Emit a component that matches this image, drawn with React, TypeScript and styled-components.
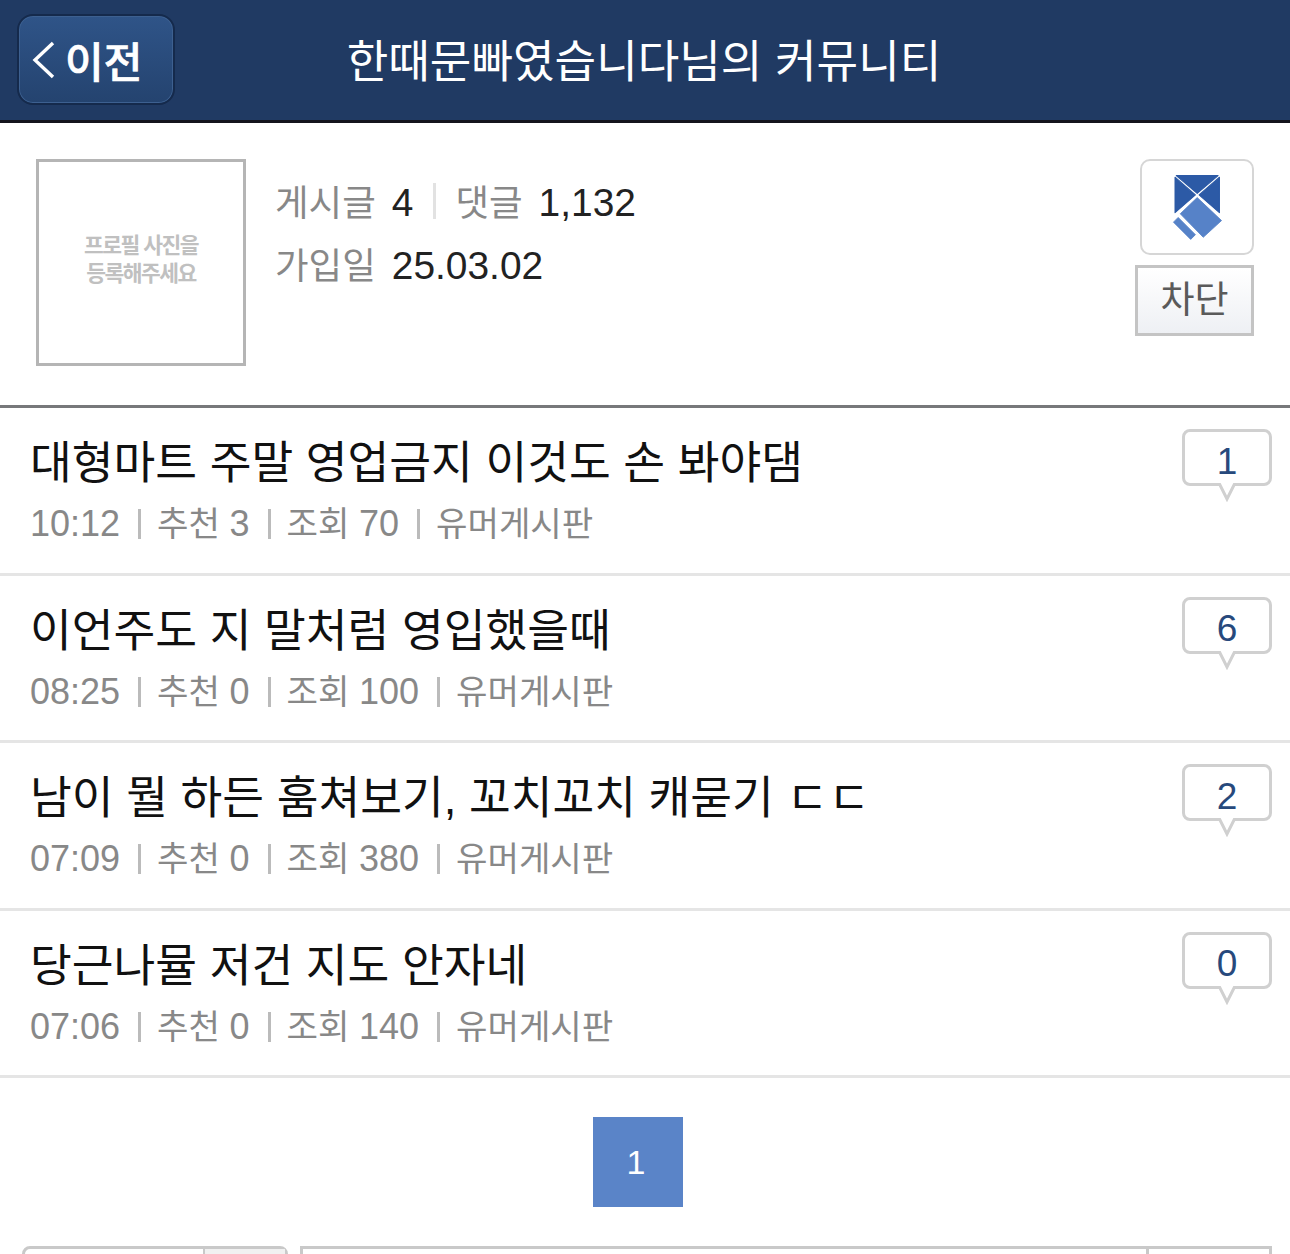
import styled, { createGlobalStyle } from "styled-components";

const posts = [
  { title: "대형마트 주말 영업금지 이것도 손 봐야댐", time: "10:12", up: 3, views: 70, board: "유머게시판", comments: 1 },
  { title: "이언주도 지 말처럼 영입했을때", time: "08:25", up: 0, views: 100, board: "유머게시판", comments: 6 },
  { title: "남이 뭘 하든 훔쳐보기, 꼬치꼬치 캐묻기 ㄷㄷ", time: "07:09", up: 0, views: 380, board: "유머게시판", comments: 2 },
  { title: "당근나뮬 저건 지도 안자네", time: "07:06", up: 0, views: 140, board: "유머게시판", comments: 0 },
];

const GlobalStyle = createGlobalStyle`
  html, body {
    margin: 0;
    padding: 0;
    background: #fff;
    overflow: hidden;
  }
  body {
    font-family: "Liberation Sans", "Noto Sans CJK KR", sans-serif;
  }
`;

const ShieldIcon = () => (
  <svg width="57" height="69" viewBox="0 0 54 66">
    <g fill="#2c5aa6" stroke="#2c5aa6" strokeWidth="1" strokeLinejoin="round">
      <polygon points="6.7,2.5 46.7,2.5 26.7,19.5" />
      <polygon points="5.5,4 25,21 5.5,38" />
      <polygon points="48,4 28.5,21 48,38" />
    </g>
    <g fill="#5682c8" stroke="#5682c8" strokeWidth="0.8" strokeLinejoin="round">
      <polygon points="26.7,23.5 50,45.5 32.5,61.5 10.5,39" />
      <polygon points="4,47 8.5,42.5 25,59 20.5,63.5" />
    </g>
  </svg>
);

export default function App() {
  return (
    <Page>
      <GlobalStyle />
      <Header>
        <BackButton>
          <svg width="24" height="40" viewBox="0 0 24 40">
            <path d="M21 3 L3 20 L21 37" fill="none" stroke="#fff" strokeWidth="3.4" />
          </svg>
          이전
        </BackButton>
        <HeaderTitle>한때문빠였습니다님의 커뮤니티</HeaderTitle>
      </Header>

      <Profile>
        <Avatar>
          프로필 사진을
          <br />
          등록해주세요
        </Avatar>
        <Stats>
          <StatRow>
            <StatLabel>게시글</StatLabel>
            <StatValue>4</StatValue>
            <StatDivider />
            <StatLabel>댓글</StatLabel>
            <StatValue>1,132</StatValue>
          </StatRow>
          <StatRow>
            <StatLabel>가입일</StatLabel>
            <StatValue>25.03.02</StatValue>
          </StatRow>
        </Stats>
        <Actions>
          <IconButton>
            <ShieldIcon />
          </IconButton>
          <BlockButton>차단</BlockButton>
        </Actions>
      </Profile>

      <PostList>
        {posts.map((post) => (
          <PostRow key={post.time}>
            <PostBody>
              <PostTitle>{post.title}</PostTitle>
              <PostMeta>
                <MetaNumber>{post.time}</MetaNumber>
                <MetaDivider />
                <span>
                  추천 <MetaNumber>{post.up}</MetaNumber>
                </span>
                <MetaDivider />
                <span>
                  조회 <MetaNumber>{post.views}</MetaNumber>
                </span>
                <MetaDivider />
                <span>{post.board}</span>
              </PostMeta>
            </PostBody>
            <CommentBubble>
              {post.comments}
              <BubbleTail width="24" height="19" viewBox="0 0 24 19">
                <path d="M4 0 L12 16 L20 0" fill="#fff" stroke="#d0d0d0" strokeWidth="3" />
              </BubbleTail>
            </CommentBubble>
          </PostRow>
        ))}
      </PostList>

      <Pagination>
        <PageNumber>1</PageNumber>
      </Pagination>

      <SearchBar>
        <SelectBox>
          <SelectArrow />
        </SelectBox>
        <SearchBox>
          <SearchSubmit />
        </SearchBox>
      </SearchBar>
    </Page>
  );
}

const Page = styled.div`
  width: 1290px;
  height: 1254px;
  overflow: hidden;
  background: #fff;
  color: #111;
`;

const Header = styled.header`
  position: relative;
  box-sizing: border-box;
  height: 123px;
  padding: 14px 0 0 17px;
  background: #203a63;
  border-bottom: 3px solid #14141c;
`;

const BackButton = styled.div`
  display: flex;
  align-items: center;
  gap: 9px;
  box-sizing: border-box;
  width: 158px;
  height: 91px;
  padding-left: 13px;
  border: 2px solid #152a4c;
  border-radius: 16px;
  background: linear-gradient(#2f5488, #24436f);
  box-shadow: inset 0 0 0 1px #3d6090;
  color: #fff;
  font-size: 42px;
  font-weight: 500;
  -webkit-text-stroke: 0.7px #fff;
`;

const HeaderTitle = styled.h1`
  position: absolute;
  top: 34px;
  left: 0;
  right: 2px;
  margin: 0;
  text-align: center;
  color: #fff;
  font-size: 45.2px;
  line-height: 58px;
  font-weight: 400;
`;

const Profile = styled.section`
  display: flex;
  box-sizing: border-box;
  height: 285px;
  padding: 36px 36px 0 36px;
  border-bottom: 3px solid #77787a;
`;

const Avatar = styled.div`
  display: flex;
  align-items: center;
  justify-content: center;
  text-align: center;
  box-sizing: border-box;
  width: 210px;
  height: 207px;
  padding-bottom: 6px;
  border: 3px solid #b5b5b5;
  color: #c0c0c0;
  font-size: 21.5px;
  line-height: 28px;
  font-weight: 700;
  letter-spacing: -1.5px;
`;

const Stats = styled.div`
  flex: 1;
  display: flex;
  flex-direction: column;
  gap: 9px;
  padding: 15px 0 0 29px;
`;

const StatRow = styled.div`
  display: flex;
  align-items: baseline;
  gap: 16px;
  height: 54px;
`;

const StatLabel = styled.span`
  color: #888;
  font-size: 36.5px;
`;

const StatValue = styled.span`
  color: #222;
  font-size: 38.9px;
`;

const StatDivider = styled.i`
  align-self: center;
  width: 3px;
  height: 36px;
  margin: 0 3px 0 4px;
  background: #e2e2e2;
`;

const Actions = styled.div`
  display: flex;
  flex-direction: column;
  align-items: flex-end;
  gap: 10px;
`;

const IconButton = styled.div`
  display: flex;
  align-items: center;
  justify-content: center;
  box-sizing: border-box;
  width: 114px;
  height: 96px;
  border: 2px solid #d6d6d6;
  border-radius: 10px;
`;

const BlockButton = styled.div`
  display: flex;
  align-items: center;
  justify-content: center;
  box-sizing: border-box;
  width: 119px;
  height: 71px;
  padding-bottom: 7px;
  border: 3px solid #c4c4c4;
  background: linear-gradient(#fff, #eef0f4);
  color: #5a5a5a;
  font-size: 37px;
`;

const PostList = styled.div`
  display: flex;
  flex-direction: column;
`;

const PostRow = styled.article`
  display: flex;
  justify-content: space-between;
  box-sizing: border-box;
  height: 167.5px;
  padding: 25px 18px 0 30px;
  border-bottom: 3px solid #e5e5e5;
`;

const PostBody = styled.div`
  display: flex;
  flex-direction: column;
`;

const PostTitle = styled.div`
  color: #111;
  font-size: 45.4px;
  line-height: 62px;
`;

const PostMeta = styled.div`
  display: flex;
  align-items: center;
  gap: 17px;
  margin-top: -1px;
  color: #888;
  font-size: 34.2px;
  line-height: 60px;
`;

const MetaNumber = styled.span`
  font-size: 36px;
`;

const MetaDivider = styled.i`
  width: 3px;
  height: 30px;
  margin: 0 -1px 0 1px;
  background: #bbb;
`;

const CommentBubble = styled.div`
  position: relative;
  display: flex;
  align-items: center;
  justify-content: center;
  box-sizing: border-box;
  width: 90px;
  height: 57px;
  margin-top: -4px;
  padding-top: 8px;
  border: 3px solid #d0d0d0;
  border-radius: 8px;
  color: #27497c;
  font-size: 37px;
`;

const BubbleTail = styled.svg`
  position: absolute;
  left: 30px;
  top: 51px;
`;

const Pagination = styled.nav`
  display: flex;
  justify-content: center;
  padding: 39px 14px 0 0;
`;

const PageNumber = styled.div`
  display: flex;
  align-items: center;
  justify-content: center;
  width: 90px;
  height: 90px;
  padding-right: 4px;
  box-sizing: border-box;
  background: #5a84c8;
  color: #fff;
  font-size: 34px;
`;

const SearchBar = styled.div`
  display: flex;
  gap: 12px;
  padding: 39px 18px 0 22px;
`;

const SelectBox = styled.div`
  display: flex;
  justify-content: flex-end;
  box-sizing: border-box;
  width: 266px;
  height: 60px;
  border: 3px solid #c9c9c9;
  border-radius: 8px 8px 0 0;
`;

const SelectArrow = styled.div`
  width: 80px;
  background: #f1f1f1;
  border-left: 2px solid #c9c9c9;
`;

const SearchBox = styled.div`
  flex: 1;
  display: flex;
  justify-content: flex-end;
  box-sizing: border-box;
  height: 60px;
  border: 3px solid #c9c9c9;
`;

const SearchSubmit = styled.div`
  width: 120px;
  border-left: 3px solid #c9c9c9;
`;
